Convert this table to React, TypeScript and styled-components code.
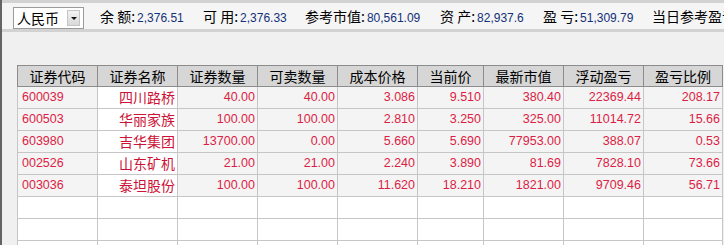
import React from "react";
import styled, { createGlobalStyle } from "styled-components";

const Global = createGlobalStyle`
  html, body { margin: 0; padding: 0; background: #f0f0f0; }
  #root { width: 724px; height: 245px; overflow: hidden; }
`;

const CJK = `"Noto Sans CJK SC", "Liberation Sans", sans-serif`;
const NUM = `"Liberation Sans", "Noto Sans CJK SC", sans-serif`;

const Screen = styled.div`
  width: 724px;
  height: 245px;
  box-sizing: border-box;
  border-left: 2px solid #646464;
  background: #f0f0f0;
  display: flex;
  flex-direction: column;
  overflow: hidden;
`;

const Band = styled.div`
  height: 3px;
  flex: none;
  background: #d2d2d2;
`;

const Toolbar = styled.div`
  height: 26px;
  flex: none;
  display: flex;
  align-items: center;
  padding-left: 11px;
  background: #f5f5f5;
  white-space: nowrap;
  overflow: hidden;
`;

const Select = styled.div`
  align-self: flex-end;
  width: 71px;
  height: 22px;
  margin-right: 16px;
  box-sizing: border-box;
  border: 1px solid #9a9a9a;
  background: #fff;
  display: flex;
  align-items: center;
  justify-content: space-between;
  padding: 0 3px 0 3px;
  flex: none;
`;

const SelectText = styled.span`
  font-family: ${CJK};
  font-size: 14px;
  color: #000;
  line-height: 1;
`;

const DropBtn = styled.span`
  width: 13px;
  height: 16px;
  box-sizing: border-box;
  background: linear-gradient(#f2f2f2, #d9d9d9);
  border: 1px solid #c4c4c4;
  display: flex;
  align-items: center;
  justify-content: center;
  &::after {
    content: "";
    border-left: 3px solid transparent;
    border-right: 3px solid transparent;
    border-top: 3px solid #111;
  }
`;

const Stat = styled.span<{ $width?: number }>`
  flex: none;
  width: ${(p) => (p.$width ? `${p.$width}px` : "auto")};
  display: inline-flex;
  align-items: baseline;
  font-family: ${CJK};
  font-size: 14px;
  color: #000;
  white-space: pre;
`;

const StatValue = styled.span`
  font-family: ${NUM};
  font-size: 12px;
  color: #13307a;
  margin-left: 2px;
`;

const GridArea = styled.div`
  flex: 1;
  padding: 33px 0 0 15px;
`;

const Table = styled.table`
  border-collapse: collapse;
  table-layout: fixed;
  width: 705px;
`;

const HeadCell = styled.th`
  height: 20px;
  padding: 0;
  box-sizing: border-box;
  background: #d6d6d6;
  border: 1px solid #8c8c8c;
  font-family: ${CJK};
  font-weight: normal;
  font-size: 14px;
  color: #000;
  text-align: center;
  line-height: 20px;
`;

const Cell = styled.td<{ $align: "left" | "right"; $shade: boolean; $cjk?: boolean }>`
  height: 21px;
  padding: ${(p) => (p.$align === "left" ? "0 0 0 4px" : "0 2px 0 0")};
  border: 1px solid #c6c6c6;
  border-top: none;
  background: ${(p) => (p.$shade ? "#f4f4f4" : "#ffffff")};
  text-align: ${(p) => p.$align};
  font-family: ${(p) => (p.$cjk ? CJK : NUM)};
  font-size: ${(p) => (p.$cjk ? "14px" : "12.5px")};
  color: ${(p) => (p.$cjk ? "#cc1236" : "#dc1d45")};
  line-height: 21px;
  white-space: nowrap;
  overflow: hidden;
`;

const columns = [
  { title: "证券代码", width: 80, align: "left" as const },
  { title: "证券名称", width: 80, align: "right" as const, cjk: true },
  { title: "证券数量", width: 80, align: "right" as const },
  { title: "可卖数量", width: 80, align: "right" as const },
  { title: "成本价格", width: 80, align: "right" as const },
  { title: "当前价", width: 66, align: "right" as const },
  { title: "最新市值", width: 80, align: "right" as const },
  { title: "浮动盈亏", width: 80, align: "right" as const },
  { title: "盈亏比例", width: 79, align: "right" as const },
];

const rows: string[][] = [
  ["600039", "四川路桥", "40.00", "40.00", "3.086", "9.510", "380.40", "22369.44", "208.17"],
  ["600503", "华丽家族", "100.00", "100.00", "2.810", "3.250", "325.00", "11014.72", "15.66"],
  ["603980", "吉华集团", "13700.00", "0.00", "5.660", "5.690", "77953.00", "388.07", "0.53"],
  ["002526", "山东矿机", "21.00", "21.00", "2.240", "3.890", "81.69", "7828.10", "73.66"],
  ["003036", "泰坦股份", "100.00", "100.00", "11.620", "18.210", "1821.00", "9709.46", "56.71"],
];

const stats: { label: string; value: string; width?: number }[] = [
  { label: "余 额:", value: "2,376.51", width: 103 },
  { label: "可 用:", value: "2,376.33", width: 102 },
  { label: "参考市值:", value: "80,561.09", width: 135 },
  { label: "资 产:", value: "82,937.6", width: 103 },
  { label: "盈 亏:", value: "51,309.79", width: 109 },
  { label: "当日参考盈亏:", value: "1,234.00" },
];

export default function App() {
  const allRows = [...rows, ...Array.from({ length: 3 }, () => Array(9).fill(""))];
  return (
    <>
      <Global />
      <Screen>
        <Band />
        <Toolbar>
          <Select>
            <SelectText>人民币</SelectText>
            <DropBtn />
          </Select>
          {stats.map((s) => (
            <Stat key={s.label} $width={s.width}>
              {s.label}
              <StatValue>{s.value}</StatValue>
            </Stat>
          ))}
        </Toolbar>
        <Band />
        <GridArea>
          <Table>
            <colgroup>
              {columns.map((c) => (
                <col key={c.title} style={{ width: c.width }} />
              ))}
            </colgroup>
            <thead>
              <tr>
                {columns.map((c) => (
                  <HeadCell key={c.title}>{c.title}</HeadCell>
                ))}
              </tr>
            </thead>
            <tbody>
              {allRows.map((r, i) => (
                <tr key={i}>
                  {columns.map((c, j) => (
                    <Cell
                      key={j}
                      $align={c.align}
                      $cjk={c.cjk}
                      $shade={r[0] !== "" && !c.cjk}
                    >
                      {r[j]}
                    </Cell>
                  ))}
                </tr>
              ))}
            </tbody>
          </Table>
        </GridArea>
      </Screen>
    </>
  );
}
